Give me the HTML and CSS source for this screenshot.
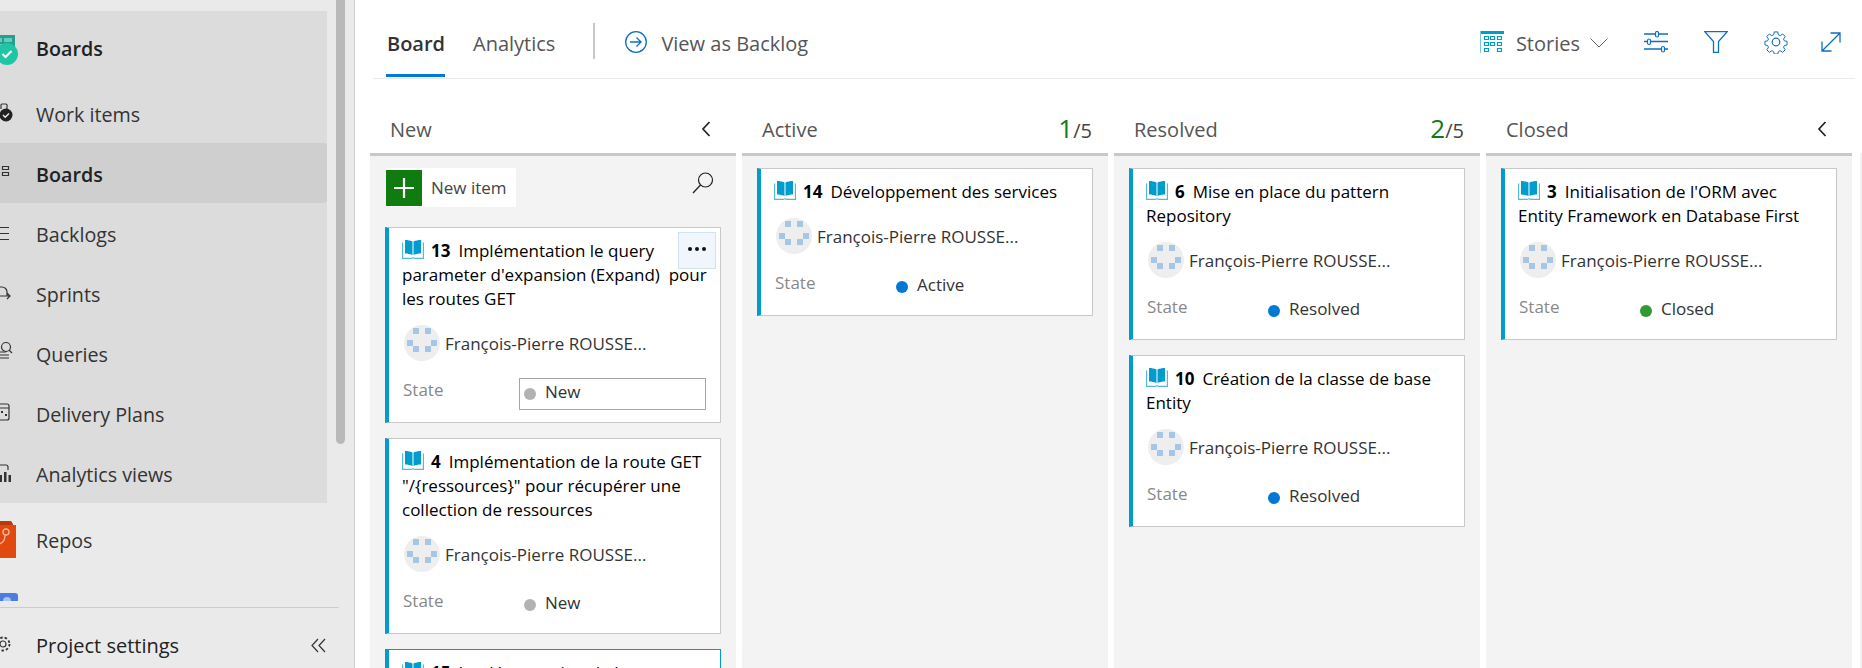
FILE: index.html
```html
<!DOCTYPE html>
<html lang="en">
<head>
  <meta charset="UTF-8">
  <title>Boards</title>
  <link rel="stylesheet" href="styles.css">
</head>
<body>
  <svg class="defs" width="0" height="0">
    <symbol id="book" viewBox="0 0 22 19">
      <path d="M3 0c3 0 5 .5 7.500 1.500V15C8 14 6 13.500 3 13.500zM19 0c-3 0-5 .5-7.500 1.500V15c2.500-1 4.500-1.500 7.500-1.500z" fill="#009ccc"/>
      <path d="M.6 2.500v15.900h9c.6 0 1 -.4 1.400-.9.4.5.8.9 1.400.9h9V2.500" fill="none" stroke="#55b8dc" stroke-width="1.200"/>
    </symbol>
    <symbol id="avatar" viewBox="0 0 36 36">
      <circle cx="18" cy="18" r="18" fill="#eeeeee"/>
      <path d="M9 3h6v6H9zM21 3h6v6h-6zM3 15h6v6H3zM27 15h6v6h-6zM9 21h6v6H9zM21 21h6v6h-6z" fill="#a6c6e6"/>
    </symbol>
  </svg>

  <aside class="sidebar">
    <div class="nav-area">
      <nav class="nav">
        <div class="nav-group">
          <a class="nav-item nav-head">
            <svg class="nav-icon" width="36" height="60" viewBox="0 0 36 60">
              <path d="M0 18h15v26H0z" fill="#2a9d8f"/>
              <path d="M0 21h2v4H0zM4 21h8v4H4zM0 27h2v4H0z" fill="#5fd0bd"/>
              <circle cx="7" cy="37" r="11" fill="#1fc6a6"/>
              <path d="M2.500 37l3 3 6-6" fill="none" stroke="#fff" stroke-width="2.200"/>
            </svg>
            <span>Boards</span>
          </a>
          <a class="nav-item">
            <svg class="nav-icon" width="36" height="60" viewBox="0 0 36 60">
              <path d="M1 26V22a1 1 0 0 1 1-1h4a1 1 0 0 1 1 1v5" fill="none" stroke="#333" stroke-width="1.200"/>
              <circle cx="6" cy="32" r="6.500" fill="#222"/>
              <path d="M3 32l2.200 2.200L9 30.500" fill="none" stroke="#eee" stroke-width="1.400"/>
            </svg>
            <span>Work items</span>
          </a>
          <a class="nav-item nav-active">
            <svg class="nav-icon" width="36" height="60" viewBox="0 0 36 60">
              <path d="M2.500 23.500h6v3h-6zM2.500 29.500h6v3h-6z" fill="none" stroke="#333" stroke-width="1.200"/>
            </svg>
            <span>Boards</span>
          </a>
          <a class="nav-item">
            <svg class="nav-icon" width="36" height="60" viewBox="0 0 36 60">
              <path d="M0 24.500h9M0 30.500h9M0 36.500h9" fill="none" stroke="#333" stroke-width="1.200"/>
            </svg>
            <span>Backlogs</span>
          </a>
          <a class="nav-item">
            <svg class="nav-icon" width="36" height="60" viewBox="0 0 36 60">
              <path d="M0 24h2a5 5 0 0 1 5 5v4M0 33h10M7 30l3 3-3 3" fill="none" stroke="#333" stroke-width="1.200"/>
            </svg>
            <span>Sprints</span>
          </a>
          <a class="nav-item">
            <svg class="nav-icon" width="36" height="60" viewBox="0 0 36 60">
              <circle cx="6" cy="24" r="4.500" fill="none" stroke="#333" stroke-width="1.200"/>
              <path d="M9 27l3 3M0 29h6M0 32h9M0 35h9" fill="none" stroke="#333" stroke-width="1.200"/>
            </svg>
            <span>Queries</span>
          </a>
          <a class="nav-item">
            <svg class="nav-icon" width="36" height="60" viewBox="0 0 36 60">
              <path d="M0 21h7a2 2 0 0 1 2 2v12a2 2 0 0 1-2 2H0M0 25h9" fill="none" stroke="#333" stroke-width="1.200"/>
              <path d="M1 28h2v2H1zM5 31h2v2H5z" fill="#333"/>
            </svg>
            <span>Delivery Plans</span>
          </a>
          <a class="nav-item">
            <svg class="nav-icon" width="36" height="60" viewBox="0 0 36 60">
              <path d="M0 22h6a2 2 0 0 1 2 2v3" fill="none" stroke="#333" stroke-width="1.200"/>
              <path d="M0 32h2v7H0zM4 29h2.500v10H4zM8.500 32H11v7H8.500z" fill="#333"/>
            </svg>
            <span>Analytics views</span>
          </a>
        </div>
        <a class="nav-item nav-repos">
          <svg class="nav-icon" width="36" height="60" viewBox="0 0 36 60">
            <path d="M0 11h11l2 3v1H0z" fill="#b93a0a"/>
            <path d="M0 15h16v33H0z" fill="#e04a0f"/>
            <circle cx="6" cy="22" r="3" fill="none" stroke="#f7b49a" stroke-width="1.400"/>
            <path d="M5 25c0 6-2 8-6 9" fill="none" stroke="#f7b49a" stroke-width="1.400"/>
          </svg>
          <span>Repos</span>
        </a>
        <div class="nav-next">
          <svg width="18" height="8" viewBox="0 0 18 8">
            <path d="M0 0h15a3 3 0 0 1 3 3v5H0z" fill="#4a7fe0"/>
            <circle cx="7" cy="8" r="4" fill="#a9c3f0"/>
          </svg>
        </div>
      </nav>
      <div class="scrollbar"></div>
    </div>
    <div class="settings">
      <svg class="nav-icon" width="36" height="30" viewBox="0 0 36 30">
        <circle cx="3" cy="14" r="3" fill="none" stroke="#333" stroke-width="1.200"/>
        <circle cx="3" cy="14" r="6.500" fill="none" stroke="#333" stroke-width="1.800" stroke-dasharray="2.500 2"/>
      </svg>
      <span>Project settings</span>
      <svg class="collapse" width="15" height="15" viewBox="0 0 15 15">
        <path d="M7 1L1 7.500 7 14M14 1L8 7.500l6 6.500" fill="none" stroke="#333" stroke-width="1.200"/>
      </svg>
    </div>
  </aside>

  <main class="main">
    <header class="toolbar">
      <a class="tab tab-active">Board</a>
      <a class="tab">Analytics</a>
      <span class="toolbar-sep"></span>
      <svg class="view-icon" width="22" height="22" viewBox="0 0 22 22">
        <circle cx="11" cy="11" r="10.300" fill="none" stroke="#106ebe" stroke-width="1.300"/>
        <path d="M5 11h11M11.500 6.500L16 11l-4.500 4.500" fill="none" stroke="#106ebe" stroke-width="1.300"/>
      </svg>
      <span class="view-link">View as Backlog</span>
      <div class="toolbar-right">
        <svg class="stories-icon" width="24" height="22" viewBox="0 0 24 22">
          <path d="M.5 0v22" stroke="#7cc6e2" stroke-width="1"/>
          <path d="M1 0h23v3H1z" fill="#009ccc"/>
          <path d="M4.500 5.500h4v3h-4zM10.500 5.500h4v3h-4zM17.500 5.500h4v3h-4zM4.500 11.500h4v3h-4zM10.500 11.500h4v3h-4zM17.500 11.500h4v3h-4zM4.500 17.500h4v3h-4zM17.500 17.500h4v3h-4z" fill="none" stroke="#009ccc" stroke-width="1.200"/>
        </svg>
        <span class="stories">Stories</span>
        <svg class="chevron" width="18" height="10" viewBox="0 0 18 10">
          <path d="M.5.500L9 9 17.500.500" fill="none" stroke="#666" stroke-width="1"/>
        </svg>
        <svg class="tool-icon" width="24" height="22" viewBox="0 0 24 22">
          <path d="M0 3h11M15 3h9M0 10.500h3M7 10.500h17M0 18h17M21 18h3" stroke="#106ebe" stroke-width="1.300" fill="none"/>
          <rect x="11.500" y=".5" width="3" height="5.500" rx="1.500" fill="none" stroke="#106ebe" stroke-width="1.200"/>
          <rect x="3.500" y="8" width="3" height="5.500" rx="1.500" fill="none" stroke="#106ebe" stroke-width="1.200"/>
          <rect x="17.500" y="15.500" width="3" height="5.500" rx="1.500" fill="none" stroke="#106ebe" stroke-width="1.200"/>
        </svg>
        <svg class="tool-icon" width="24" height="22" viewBox="0 0 24 22">
          <path d="M.8.700h22.400L14.500 10.500v10.800h-5V10.500z" fill="none" stroke="#106ebe" stroke-width="1.300"/>
        </svg>
        <svg class="tool-icon" width="24" height="24" viewBox="0 0 24 24">
          <circle cx="12" cy="12" r="3.800" fill="none" stroke="#106ebe" stroke-width="1.200"/>
          <path d="M10 .8h4l.6 3.200 2 .9 2.800-1.800 2.800 2.800-1.800 2.800.9 2 3 .6v4l-3 .6-.9 2 1.800 2.800-2.800 2.800-2.800-1.800-2 .9-.6 2.800h-4l-.6-2.800-2-.9-2.800 1.800-2.800-2.800 1.800-2.800-.9-2-3-.6v-4l3-.6.900-2-1.800-2.800 2.800-2.800L7.400 4.900l2-.9z" fill="none" stroke="#106ebe" stroke-width="1.100" transform="translate(1.200 1.200) scale(.9)"/>
        </svg>
        <svg class="tool-icon tool-last" width="20" height="20" viewBox="0 0 20 20">
          <path d="M1 19L19 1M9.500 1H19v9.500M1 9.500V19h9.500" fill="none" stroke="#106ebe" stroke-width="1.300"/>
        </svg>
      </div>
    </header>

    <div class="board">
      <section class="column">
        <div class="column-head">
          <span class="column-name">New</span>
          <svg class="column-toggle" width="10" height="16" viewBox="0 0 10 16">
            <path d="M8.500 1L2 8l6.500 7" fill="none" stroke="#222" stroke-width="1.700"/>
          </svg>
        </div>
        <div class="column-body">
          <div class="new-row">
            <button class="new-item">
              <span class="new-plus">
                <svg width="20" height="20" viewBox="0 0 20 20"><path d="M10 0v20M0 10h20" stroke="#fff" stroke-width="2.200"/></svg>
              </span>
              <span class="new-label">New item</span>
            </button>
            <svg class="search" width="22" height="22" viewBox="0 0 22 22">
              <circle cx="13.500" cy="8" r="7" fill="none" stroke="#222" stroke-width="1.200"/>
              <path d="M8.500 13L1 21" stroke="#222" stroke-width="1.300"/>
            </svg>
          </div>

          <article class="card">
            <button class="card-more"><i></i><i></i><i></i></button>
            <div class="card-title"><svg class="book"><use href="#book"/></svg><b>13</b>Implémentation le query<br>parameter d'expansion (Expand)&nbsp; pour<br>les routes GET</div>
            <div class="card-owner"><svg class="avatar"><use href="#avatar"/></svg><span>François-Pierre ROUSSE...</span></div>
            <div class="card-state">
              <span class="state-label">State</span>
              <span class="state-value state-focus"><i class="dot dot-new"></i>New</span>
            </div>
          </article>

          <article class="card">
            <div class="card-title"><svg class="book"><use href="#book"/></svg><b>4</b>Implémentation de la route GET<br>"/{ressources}" pour récupérer une<br>collection de ressources</div>
            <div class="card-owner"><svg class="avatar"><use href="#avatar"/></svg><span>François-Pierre ROUSSE...</span></div>
            <div class="card-state">
              <span class="state-label">State</span>
              <span class="state-value"><i class="dot dot-new"></i>New</span>
            </div>
          </article>

          <article class="card card-selected">
            <div class="card-title"><svg class="book"><use href="#book"/></svg><b>15</b>Implémentation de la route</div>
          </article>
        </div>
      </section>

      <section class="column">
        <div class="column-head">
          <span class="column-name">Active</span>
          <span class="column-count"><em>1</em>/5</span>
        </div>
        <div class="column-body column-cards">
          <article class="card">
            <div class="card-title"><svg class="book"><use href="#book"/></svg><b>14</b>Développement des services</div>
            <div class="card-owner"><svg class="avatar"><use href="#avatar"/></svg><span>François-Pierre ROUSSE...</span></div>
            <div class="card-state">
              <span class="state-label">State</span>
              <span class="state-value"><i class="dot dot-active"></i>Active</span>
            </div>
          </article>
        </div>
      </section>

      <section class="column">
        <div class="column-head">
          <span class="column-name">Resolved</span>
          <span class="column-count"><em>2</em>/5</span>
        </div>
        <div class="column-body column-cards">
          <article class="card">
            <div class="card-title"><svg class="book"><use href="#book"/></svg><b>6</b>Mise en place du pattern<br>Repository</div>
            <div class="card-owner"><svg class="avatar"><use href="#avatar"/></svg><span>François-Pierre ROUSSE...</span></div>
            <div class="card-state">
              <span class="state-label">State</span>
              <span class="state-value"><i class="dot dot-active"></i>Resolved</span>
            </div>
          </article>
          <article class="card">
            <div class="card-title"><svg class="book"><use href="#book"/></svg><b>10</b>Création de la classe de base<br>Entity</div>
            <div class="card-owner"><svg class="avatar"><use href="#avatar"/></svg><span>François-Pierre ROUSSE...</span></div>
            <div class="card-state">
              <span class="state-label">State</span>
              <span class="state-value"><i class="dot dot-active"></i>Resolved</span>
            </div>
          </article>
        </div>
      </section>

      <section class="column">
        <div class="column-head">
          <span class="column-name">Closed</span>
          <svg class="column-toggle" width="10" height="16" viewBox="0 0 10 16">
            <path d="M8.500 1L2 8l6.500 7" fill="none" stroke="#222" stroke-width="1.700"/>
          </svg>
        </div>
        <div class="column-body column-cards">
          <article class="card">
            <div class="card-title"><svg class="book"><use href="#book"/></svg><b>3</b>Initialisation de l'ORM avec<br>Entity Framework en Database First</div>
            <div class="card-owner"><svg class="avatar"><use href="#avatar"/></svg><span>François-Pierre ROUSSE...</span></div>
            <div class="card-state">
              <span class="state-label">State</span>
              <span class="state-value"><i class="dot dot-closed"></i>Closed</span>
            </div>
          </article>
        </div>
      </section>

      <div class="column-rest"></div>
    </div>
  </main>
</body>
</html>
```

FILE: styles.css
```css
html, body {
  height: 100%;
}

body {
  margin: 0;
  display: flex;
  overflow: hidden;
  background-color: #fff;
  color: #333;
  font-family: 'Open Sans', 'Noto Sans', sans-serif;
  font-size: 20px;
}

.defs {
  display: block;
  position: absolute;
}

/* Sidebar */

.sidebar {
  flex: none;
  display: flex;
  flex-direction: column;
  width: 354px;
  height: 668px;
  border-right: 1px solid #ccc;
  background-color: #eaeaea;
}

.nav-area {
  flex: none;
  display: flex;
  height: 601px;
  overflow: hidden;
}

.nav {
  width: 327px;
  flex: none;
  font-size: 19.7px;
}

.nav-group {
  margin-top: 11px;
  background-color: #dcdcdc;
}

.nav-group span {
  padding-top: 2px;
}

.nav-item {
  display: flex;
  align-items: center;
  height: 60px;
  color: #333;
}

.nav-icon {
  flex: none;
}

.nav-head {
  height: 72px;
  font-weight: 600;
  color: #222;
}

.nav-active {
  border-radius: 0 3px 3px 0;
  background-color: #cfcfcf;
  font-weight: 600;
  color: #222;
}

.nav-repos {
  height: 74px;
}

.nav-next {
  height: 8px;
  padding-top: 16px;
  line-height: 0;
}

.scrollbar {
  flex: none;
  width: 9px;
  height: 444px;
  margin-left: 9px;
  border-radius: 0 0 5px 5px;
  background-color: #b9b9b9;
}

.settings {
  flex: none;
  display: flex;
  align-items: center;
  box-sizing: border-box;
  width: 339px;
  height: 61px;
  margin-top: 6px;
  padding-top: 14px;
  border-top: 1px solid #ccc;
  color: #222;
}

.collapse {
  margin-left: auto;
  margin-right: 13px;
}

/* Toolbar */

.main {
  flex: 1;
  min-width: 0;
}

.toolbar {
  display: flex;
  align-items: center;
  box-sizing: border-box;
  height: 79px;
  margin: 0 7px 0 18px;
  padding-top: 8px;
  border-bottom: 1px solid #eaeaea;
}

.tab {
  position: relative;
  margin-left: 13px;
  width: 60px;
  text-align: center;
  color: #555;
}

.tab + .tab {
  margin-left: 27px;
  width: auto;
}

.tab-active {
  font-weight: 600;
  color: #333;
}

.tab-active::after {
  content: "";
  position: absolute;
  left: 0;
  right: 1px;
  top: 44px;
  height: 3px;
  background-color: #0078d4;
}

.toolbar-sep {
  width: 2px;
  height: 36px;
  margin-left: 38px;
  margin-top: -4px;
  background-color: #c8c8c8;
}

.view-icon {
  margin-left: 30px;
  margin-top: -2px;
}

.view-link {
  margin-left: 14px;
  color: #555;
}

.toolbar-right {
  display: flex;
  align-items: center;
  margin-left: auto;
}

.stories-icon {
  margin-top: -2px;
}

.stories {
  margin-left: 12px;
  color: #555;
}

.chevron {
  margin-left: 10px;
}

.tool-icon {
  margin-left: 36px;
  margin-top: -2px;
}

.tool-last {
  margin-left: 33px;
  margin-right: 14px;
}

/* Board */

.board {
  display: flex;
  gap: 6px;
  margin-left: 15px;
}

.column {
  flex: none;
  width: 366px;
}

.column-rest {
  flex: none;
  width: 10px;
  height: 515px;
  margin: 74px 0 0 2px;
  background-color: #f3f3f3;
}

.column-head {
  display: flex;
  align-items: center;
  justify-content: space-between;
  height: 50px;
  padding: 24px 25px 0 20px;
  border-bottom: 3px solid #c8c8c8;
  color: #555;
}

.column-name {
  padding-top: 2px;
}

.column-toggle {
  margin-top: 2px;
}

.column-count {
  margin-right: -9px;
  color: #444;
}

.column-count em {
  font-style: normal;
  font-size: 26px;
  color: #107c10;
}

.column-body {
  height: 520px;
  padding: 12px 15px;
  box-sizing: border-box;
  background-color: #f3f3f3;
  overflow: hidden;
}

.new-row {
  display: flex;
  align-items: center;
  justify-content: space-between;
  height: 39px;
  margin-bottom: 20px;
  padding-right: 7px;
}

.new-item {
  display: flex;
  align-items: center;
  width: 130px;
  height: 39px;
  padding: 0;
  margin-left: 1px;
  border: none;
  background-color: #fff;
  font: inherit;
  font-size: 17px;
  color: #444;
}

.new-plus {
  display: flex;
  align-items: center;
  justify-content: center;
  width: 36px;
  height: 36px;
  background-color: #107c10;
}

.new-label {
  margin-left: 9px;
}

.search {
  margin-top: -10px;
}

/* Cards */

.card {
  position: relative;
  margin-bottom: 15px;
  padding: 11px 12px 12px 13px;
  border: 1px solid #c8c8c8;
  border-left: 4px solid #009ccc;
  background-color: #fff;
  font-size: 17px;
}

.card-selected {
  border-color: #009ccc;
}

.card-more {
  position: absolute;
  top: 4px;
  right: 4px;
  display: flex;
  align-items: center;
  justify-content: center;
  gap: 3px;
  width: 38px;
  height: 37px;
  padding: 0 0 4px;
  border: 1px solid #cfe3f5;
  background-color: #f0f6fc;
}

.card-more i {
  width: 4px;
  height: 4px;
  border-radius: 50%;
  background-color: #111;
}

.card-title {
  line-height: 24px;
  color: #000;
  white-space: nowrap;
}

.card-title b {
  font-weight: 700;
  margin-right: 8px;
}

.book {
  width: 22px;
  height: 19px;
  margin-right: 7px;
  vertical-align: -2px;
}

.card-owner {
  display: flex;
  align-items: center;
  gap: 5px;
  margin-top: 14px;
  padding-left: 2px;
  color: #333;
}

.avatar {
  width: 36px;
  height: 36px;
}

.card-state {
  display: flex;
  align-items: center;
  height: 32px;
  margin-top: 17px;
  padding-left: 1px;
}

.state-label {
  width: 116px;
  margin-top: -10px;
  color: #888;
}

.state-value {
  display: flex;
  align-items: center;
  box-sizing: border-box;
  width: 187px;
  height: 32px;
  padding: 0 0 5px 4px;
  border: 1px solid transparent;
  color: #333;
}

.state-focus {
  border-color: #a6a6a6;
}

.dot {
  width: 12px;
  height: 12px;
  margin: 5px 9px 0 0;
  border-radius: 50%;
}

.dot-new {
  background-color: #b2b2b2;
}

.dot-active {
  background-color: #0078d4;
}

.dot-closed {
  background-color: #339933;
}
```
